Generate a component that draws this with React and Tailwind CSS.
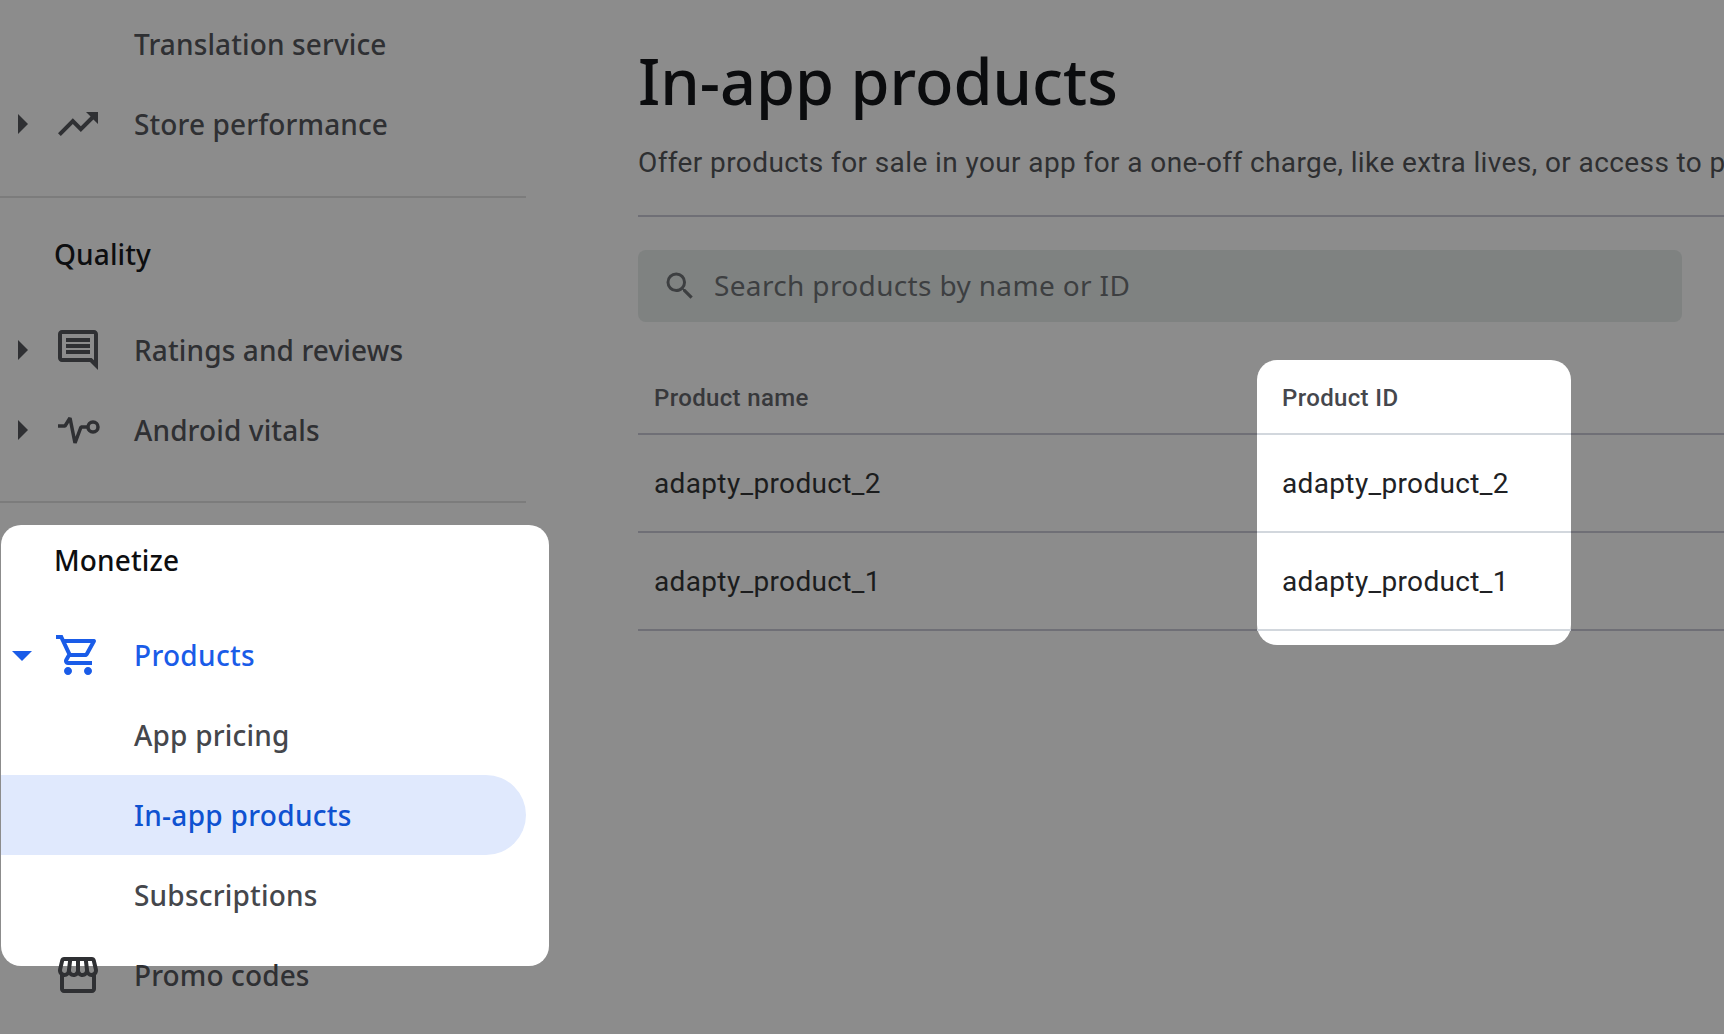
const icons = {
  trend: "M16 6l2.29 2.29-4.88 4.88-4-4L2 16.59 3.41 18l6-6 4 4 6.3-6.29L22 12V6z",
  comment: "M21.99 4c0-1.1-.89-2-1.99-2H4c-1.1 0-2 .9-2 2v12c0 1.1.9 2 2 2h14l4 4-.01-18zM20 4v13.17L18.83 16H4V4h16zM6 12h12v2H6zm0-3h12v2H6zm0-3h12v2H6z",
  cart: "M15.55 13c.75 0 1.41-.41 1.75-1.03l3.58-6.49c.37-.66-.11-1.48-.87-1.48H5.21l-.94-2H1v2h2l3.6 7.59-1.35 2.44C4.52 15.37 5.48 17 7 17h12v-2H7l1.1-2h7.45zM6.16 6h12.15l-2.76 5H8.53L6.16 6zM7 18c-1.1 0-1.99.9-1.99 2S5.9 22 7 22s2-.9 2-2-.9-2-2-2zm10 0c-1.1 0-1.99.9-1.99 2s.89 2 1.99 2 2-.9 2-2-.9-2-2-2z",
  store: "M21.9 8.89l-1.05-4.37c-.22-.9-1-1.52-1.91-1.52H5.05c-.9 0-1.69.63-1.9 1.52L2.1 8.89c-.24 1.02-.02 2.06.62 2.88.08.11.19.19.28.29V19c0 1.1.9 2 2 2h14c1.1 0 2-.9 2-2v-6.94c.09-.09.2-.18.28-.28.64-.82.87-1.87.62-2.89zm-2.99-3.9l1.05 4.37c.1.42.01.84-.25 1.17-.14.18-.44.47-.94.47-.61 0-1.14-.49-1.21-1.14L16.98 5l1.93-.01zM13 5h1.96l.54 4.52c.05.39-.07.78-.33 1.07-.22.26-.54.41-.95.41-.67 0-1.22-.59-1.22-1.31V5zM8.49 9.52L9.04 5H11v4.69c0 .72-.55 1.31-1.29 1.31-.34 0-.65-.15-.89-.41-.25-.29-.37-.68-.33-1.07zm-4.45-.16L5.05 5h1.97l-.58 4.86c-.08.65-.6 1.14-1.21 1.14-.49 0-.8-.29-.93-.47-.27-.32-.36-.75-.26-1.17zM5 19v-6.03c.08.01.15.03.23.03.87 0 1.66-.36 2.24-.95.6.6 1.4.95 2.31.95.87 0 1.65-.36 2.23-.93.59.57 1.39.93 2.29.93.84 0 1.64-.35 2.24-.95.58.59 1.37.95 2.24.95.08 0 .15-.02.23-.03V19H5z",
};

const Icon = ({ d }) => (
  <svg viewBox="0 0 24 24" className="w-12 h-12 shrink-0 fill-current">
    <path d={d} />
  </svg>
);

const VitalsIcon = () => (
  <svg viewBox="0 0 48 48" className="w-12 h-12 shrink-0 fill-none stroke-current" strokeWidth="3.5" strokeLinejoin="bevel">
    <path d="M4 20h7l5-8 5 25 6-16h6" />
    <circle cx="39" cy="21" r="5" />
  </svg>
);

const Caret = ({ open }) => (
  <svg viewBox="0 0 20 20" className="w-5 h-5 fill-current">
    {open ? <path d="M0 6h20L10 16z" /> : <path d="M6 0l10 10L6 20z" />}
  </svg>
);

const NavRow = ({ label, caret, open, icon, className = "text-[#2f3033]" }) => (
  <div className={`relative flex items-center h-20 ${className}`}>
    <div className="w-[54px] pl-3 shrink-0 flex">{caret && <Caret open={open} />}</div>
    <div className="w-[80px] shrink-0 flex">{icon}</div>
    <span>{label}</span>
  </div>
);

const Heading = ({ label }) => (
  <div className="relative flex items-center h-20 pl-[54px] text-[#0d0e10]">{label}</div>
);

const Divider = ({ className }) => <div className={`h-[2px] bg-[#7c7c7c] ${className}`} />;

const TableRow = ({ name, id, header }) => (
  <div className={`grid grid-cols-[619px_314px] border-b-2 border-[#6f6f76] ${header ? "h-[75px] pt-[2px] text-[24px] font-medium text-[#37383b]" : "h-[98px] pt-[2px] text-[28px] text-[#1b1c1d]"}`}>
    <div className="flex items-center pl-4">{name}</div>
    <div className={`relative z-10 flex items-center pl-[25px] border-b-2 border-[#d2d7dd] -mb-[2px] ${header ? "text-[#45474d]" : "text-[#202124]"}`}>{id}</div>
  </div>
);

export default function App() {
  return (
    <div className="flex h-screen overflow-hidden bg-[#8c8c8c] font-['Noto_Sans',sans-serif] font-medium text-[28px] tracking-[0.12px] whitespace-nowrap">
      <aside className="w-[526px] shrink-0 pt-1">
        <NavRow label="Translation service" />
        <NavRow label="Store performance" caret icon={<Icon d={icons.trend} />} />
        <Divider className="mt-8" />
        <div className="mt-4">
          <Heading label="Quality" />
        </div>
        <div className="mt-4">
          <NavRow label="Ratings and reviews" caret icon={<Icon d={icons.comment} />} />
          <NavRow label="Android vitals" caret icon={<VitalsIcon />} />
        </div>
        <Divider className="mt-[31px]" />
        <div className="relative mt-4">
          <div className="absolute top-[6px] left-px w-[548px] h-[441px] bg-white rounded-[20px]" />
          <div className="pt-px -mb-px">
            <Heading label="Monetize" />
          </div>
          <div className="mt-4">
            <NavRow label="Products" caret open icon={<Icon d={icons.cart} />} className="text-[#1a5ce8] tracking-[0.3px]" />
            <NavRow label="App pricing" className="text-[#45474c] tracking-[0.2px]" />
            <div className="relative ml-px rounded-r-[40px] bg-[#e0e9fd]">
              <NavRow label="In-app products" className="text-[#0f52d1] -ml-px tracking-[0.3px]" />
            </div>
            <NavRow label="Subscriptions" className="text-[#45474c] tracking-[0.2px]" />
            <NavRow label="Promo codes" icon={<Icon d={icons.store} />} />
          </div>
        </div>
      </aside>

      <main className="flex-1 min-w-0 ml-[112px] pt-[41px]">
        <h1 className="h-[80px] flex items-center text-[63px] font-medium tracking-normal text-[#0b0c0e]">In-app products</h1>
        <p className="mt-[24px] font-['Roboto',sans-serif] font-normal text-[28px] leading-9 text-[#2e2f31] tracking-[0.4px]">
          Offer products for sale in your app for a one-off charge, like extra lives, or access to premium content
        </p>
        <div className="mt-[34px] h-[2px] bg-[#6f6f76]" />
        <div className="mt-[33px] w-[1044px] h-[72px] flex items-center rounded-lg bg-[#7f8281] text-[#3d3f41]">
          <svg viewBox="0 0 24 24" className="w-9 h-9 ml-6 fill-current">
            <path d="M15.5 14h-.79l-.28-.27A6.47 6.47 0 0 0 16 9.5 6.5 6.5 0 1 0 9.5 16c1.61 0 3.09-.59 4.23-1.57l.27.28v.79l5 4.99L20.49 19l-4.99-5zm-6 0C7.01 14 5 11.99 5 9.5S7.01 5 9.5 5 14 7.01 14 9.5 11.99 14 9.5 14z" />
          </svg>
          <span className="ml-4 -mt-[2px] font-normal tracking-[0.35px]">Search products by name or ID</span>
        </div>
        <div className="relative mt-[38px] font-['Roboto',sans-serif] font-normal tracking-[0.35px]">
          <div className="absolute top-0 left-[619px] w-[314px] h-[285px] bg-white rounded-[20px]" />
          <TableRow header name="Product name" id="Product ID" />
          <TableRow name="adapty_product_2" id="adapty_product_2" />
          <TableRow name="adapty_product_1" id="adapty_product_1" />
        </div>
      </main>
    </div>
  );
}
